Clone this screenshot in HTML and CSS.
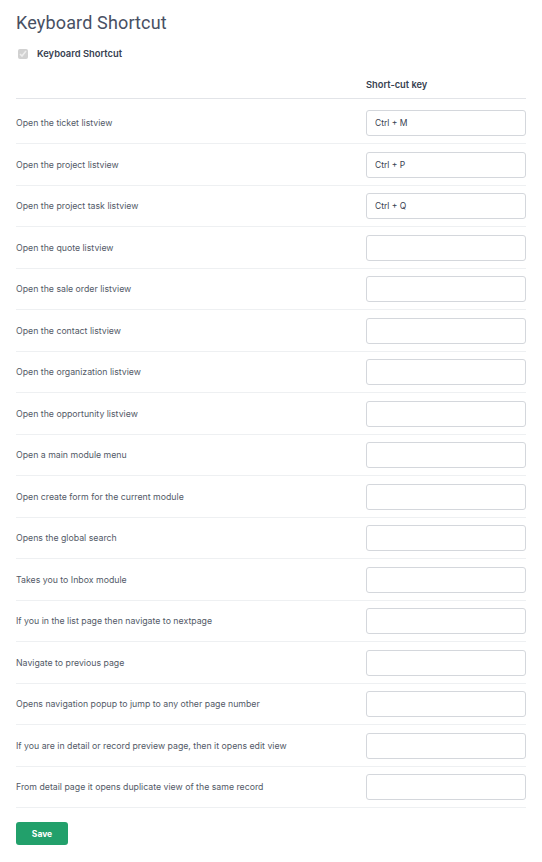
FILE: index.html
```html
<!DOCTYPE html>
<html lang="en">
<head>
  <meta charset="UTF-8" />
  <title>Keyboard Shortcut</title>
  <link rel="stylesheet" href="styles.css">
</head>
<body>

  <div class="page">
    <h1>Keyboard Shortcut</h1>

    <label class="enable-row">
      <input type="checkbox" checked disabled>
      <span>Keyboard Shortcut</span>
    </label>

    <div class="shortcut-head">
      <span class="head-label"></span>
      <span class="head-key">Short-cut key</span>
    </div>

    <div class="shortcut-list">
      <div class="shortcut-row">
        <span class="row-label">Open the ticket listview</span>
        <input class="key-input" type="text" value="Ctrl + M">
      </div>
      <div class="shortcut-row">
        <span class="row-label">Open the project listview</span>
        <input class="key-input" type="text" value="Ctrl + P">
      </div>
      <div class="shortcut-row">
        <span class="row-label">Open the project task listview</span>
        <input class="key-input" type="text" value="Ctrl + Q">
      </div>
      <div class="shortcut-row">
        <span class="row-label">Open the quote listview</span>
        <input class="key-input" type="text">
      </div>
      <div class="shortcut-row">
        <span class="row-label">Open the sale order listview</span>
        <input class="key-input" type="text">
      </div>
      <div class="shortcut-row">
        <span class="row-label">Open the contact listview</span>
        <input class="key-input" type="text">
      </div>
      <div class="shortcut-row">
        <span class="row-label">Open the organization listview</span>
        <input class="key-input" type="text">
      </div>
      <div class="shortcut-row">
        <span class="row-label">Open the opportunity listview</span>
        <input class="key-input" type="text">
      </div>
      <div class="shortcut-row">
        <span class="row-label">Open a main module menu</span>
        <input class="key-input" type="text">
      </div>
      <div class="shortcut-row">
        <span class="row-label">Open create form for the current module</span>
        <input class="key-input" type="text">
      </div>
      <div class="shortcut-row">
        <span class="row-label">Opens the global search</span>
        <input class="key-input" type="text">
      </div>
      <div class="shortcut-row">
        <span class="row-label">Takes you to Inbox module</span>
        <input class="key-input" type="text">
      </div>
      <div class="shortcut-row">
        <span class="row-label">If you in the list page then navigate to nextpage</span>
        <input class="key-input" type="text">
      </div>
      <div class="shortcut-row">
        <span class="row-label">Navigate to previous page</span>
        <input class="key-input" type="text">
      </div>
      <div class="shortcut-row">
        <span class="row-label">Opens navigation popup to jump to any other page number</span>
        <input class="key-input" type="text">
      </div>
      <div class="shortcut-row">
        <span class="row-label">If you are in detail or record preview page, then it opens edit view</span>
        <input class="key-input" type="text">
      </div>
      <div class="shortcut-row">
        <span class="row-label">From detail page it opens duplicate view of the same record</span>
        <input class="key-input" type="text">
      </div>
    </div>

    <button class="save-button">Save</button>
  </div>

</body>
</html>
```

FILE: styles.css
```css
body {
  margin: 0;
  background-color: #ffffff;
  font-family: Inter, 'Noto Sans', sans-serif;
  color: #4b5563;
}

.page {
  padding: 0 16px;
  width: 510px;
}

h1 {
  margin: 0;
  padding-top: 11px;
  font-family: Roboto, sans-serif;
  font-weight: 400;
  font-size: 18px;
  letter-spacing: 0.15px;
  line-height: 24px;
  color: #485063;
}

.enable-row {
  display: flex;
  align-items: center;
  gap: 9px;
  margin-top: 13px;
  padding-left: 2px;
  font-size: 9.4px;
  font-weight: 600;
  color: #374151;
}

.enable-row input {
  width: 10px;
  height: 10px;
  margin: 0;
}

.shortcut-head {
  display: flex;
  justify-content: space-between;
  margin-top: 20px;
  padding-bottom: 8px;
  border-bottom: 1px solid #e2e4e8;
  font-size: 9.3px;
  font-weight: 600;
  color: #374151;
}

.head-key {
  width: 160px;
}

.shortcut-row {
  display: flex;
  justify-content: space-between;
  align-items: center;
  padding: 7.25px 0;
  border-bottom: 1px solid #eef0f2;
  font-size: 8.75px;
  color: #535a67;
}

.shortcut-row:first-child {
  padding-top: 11px;
}

.key-input {
  width: 160px;
  height: 26px;
  box-sizing: border-box;
  padding: 0 8px;
  border: 1px solid #d4d7dc;
  border-radius: 3px;
  font-family: Inter, sans-serif;
  font-size: 8.5px;
  color: #374151;
}

.save-button {
  margin-top: 14px;
  width: 52px;
  height: 23px;
  border: none;
  border-radius: 3px;
  background-color: #22a06b;
  color: #ffffff;
  font-family: Inter, sans-serif;
  font-weight: 700;
  font-size: 8.5px;
  cursor: pointer;
}
```
